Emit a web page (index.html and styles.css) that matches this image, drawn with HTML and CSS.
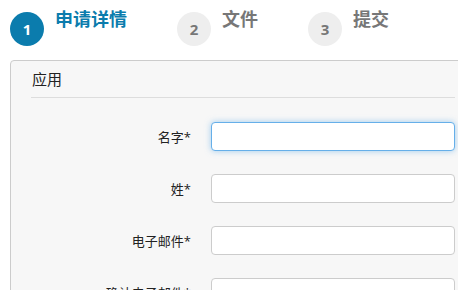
FILE: index.html
```html
<!DOCTYPE html>
<html lang="zh">
<head>
  <meta charset="UTF-8" />
  <title>申请</title>
  <link rel="stylesheet" href="styles.css">
</head>
<body>

  <div class="steps">
    <div class="step active">
      <span class="step-num">1</span>
      <span class="step-title">申请详情</span>
    </div>
    <div class="step">
      <span class="step-num">2</span>
      <span class="step-title">文件</span>
    </div>
    <div class="step">
      <span class="step-num">3</span>
      <span class="step-title">提交</span>
    </div>
  </div>

  <div class="panel">
    <div class="panel-heading">应用</div>
    <form class="form">
      <label for="first">名字*</label>
      <input type="text" id="first" class="focused" />
      <label for="last">姓*</label>
      <input type="text" id="last" />
      <label for="email">电子邮件*</label>
      <input type="email" id="email" />
      <label for="email2">确认电子邮件*</label>
      <input type="email" id="email2" />
    </form>
  </div>

</body>
</html>
```

FILE: styles.css
```css
body {
  margin: 0;
  padding: 12px 0 0 10px;
  font-family: "Open Sans", "Noto Sans CJK SC", sans-serif;
  background: #fff;
  color: #333;
  width: 466px;
  overflow: hidden;
}
.steps {
  display: flex;
  gap: 50px;
  height: 48px;
}
.step {
  display: flex;
  align-items: flex-start;
  gap: 11px;
}
.step-num {
  width: 34px;
  height: 34px;
  border-radius: 50%;
  background: #eeeeee;
  color: #777;
  font-weight: bold;
  font-size: 15px;
  display: flex;
  align-items: center;
  justify-content: center;
}
.step-title {
  font-size: 18px;
  font-weight: bold;
  color: #777;
  line-height: 18px;
  margin-top: -2px;
}
.step.active .step-num {
  background: #0b7cad;
  color: #fff;
}
.step.active .step-title {
  color: #0b7cad;
}

.panel {
  border: 1px solid #ccc;
  border-radius: 4px;
  background: #f7f7f7;
  padding: 0 20px;
  height: 300px;
}
.panel-heading {
  font-size: 15px;
  line-height: 20px;
  padding: 8px 0 8px 1px;
  border-bottom: 1px solid #ddd;
  color: #222;
}
.form {
  display: grid;
  grid-template-columns: 180px 1fr;
  row-gap: 23px;
  margin-top: 24px;
  align-items: center;
}
.form label {
  text-align: right;
  padding-right: 20px;
  font-size: 13px;
  color: #222;
}
.form input {
  height: 29px;
  box-sizing: border-box;
  border: 1px solid #ccc;
  border-radius: 4px;
  background: #fff;
  font-size: 13px;
  margin: 0;
}
.form input.focused {
  border-color: #66afe9;
  box-shadow: 0 0 6px rgba(102, 175, 233, 0.6);
  outline: none;
}
```
